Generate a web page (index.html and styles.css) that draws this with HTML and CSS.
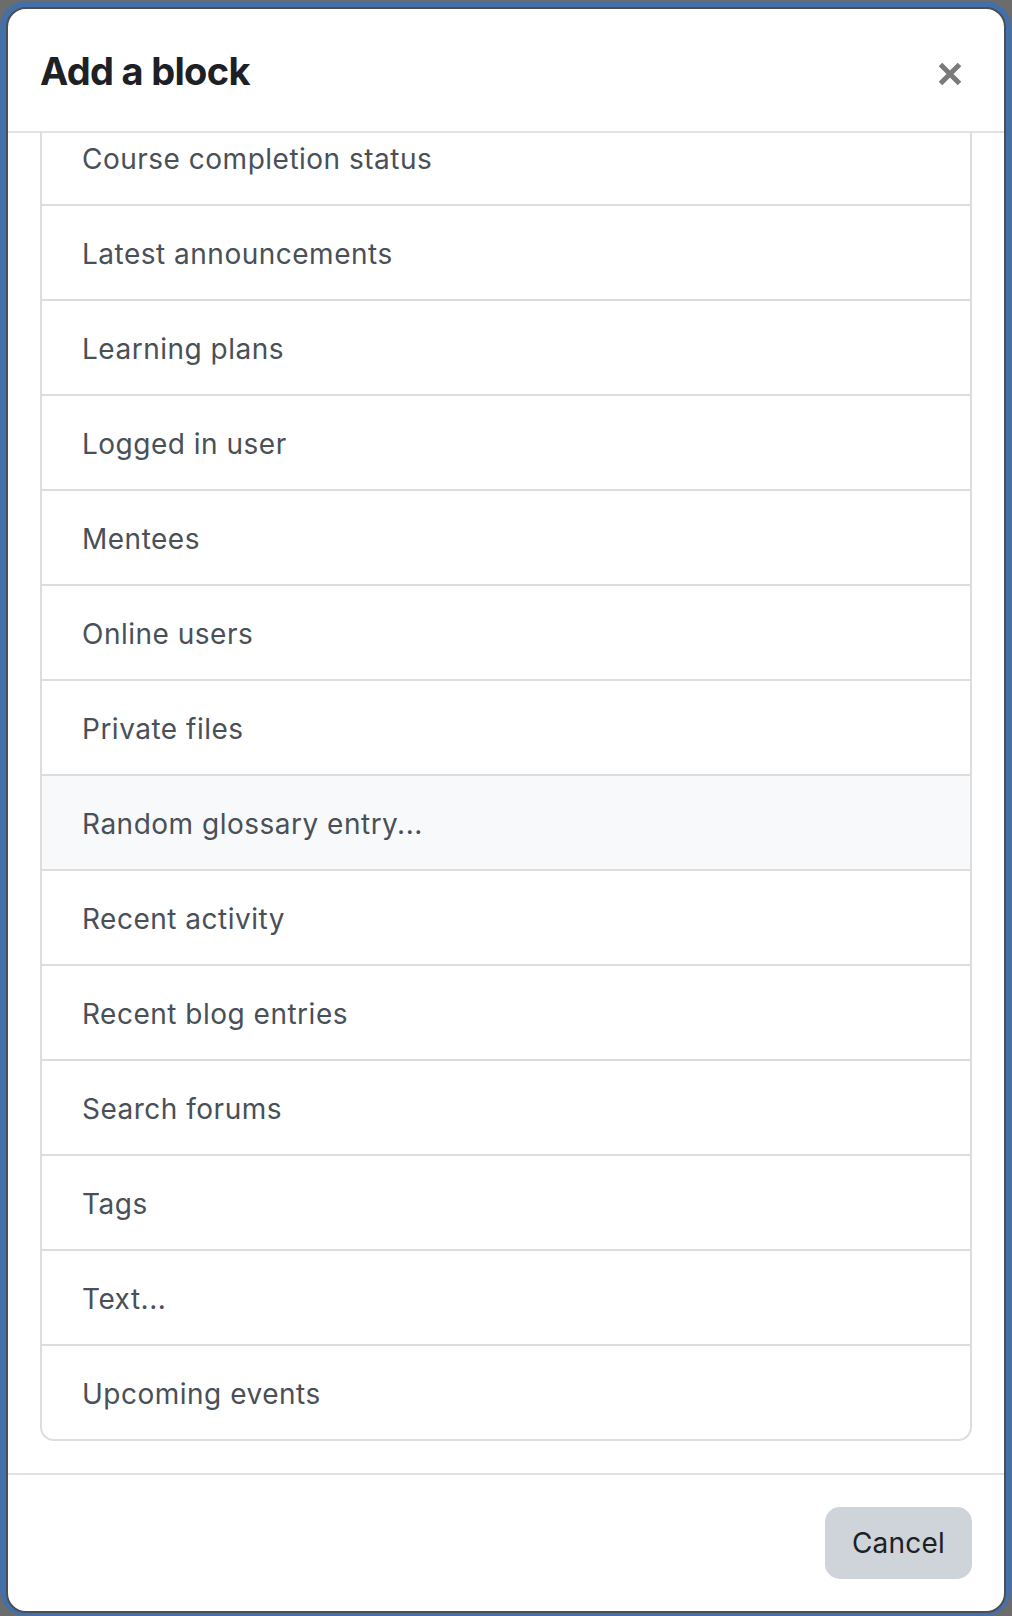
FILE: index.html
```html
<!DOCTYPE html>
<html lang="en">
<head>
<meta charset="utf-8">
<title>Add a block</title>
<link rel="stylesheet" href="styles.css">
</head>
<body>
<div class="ring">
  <div class="modal">
    <div class="modal-header">
      <h5 class="modal-title">Add a block</h5>
      <button class="close" aria-label="Close">
        <svg width="24" height="24" viewBox="0 0 24 24"><path d="M2.5 2.5 L21.5 21.5 M21.5 2.5 L2.5 21.5" stroke="#7a7a7a" stroke-width="5" stroke-linecap="butt" fill="none"/></svg>
      </button>
    </div>
    <div class="modal-body">
      <div class="list-group">
        <a class="item">Course completion status</a>
        <a class="item">Latest announcements</a>
        <a class="item">Learning plans</a>
        <a class="item">Logged in user</a>
        <a class="item">Mentees</a>
        <a class="item">Online users</a>
        <a class="item">Private files</a>
        <a class="item hover">Random glossary entry...</a>
        <a class="item">Recent activity</a>
        <a class="item">Recent blog entries</a>
        <a class="item">Search forums</a>
        <a class="item">Tags</a>
        <a class="item">Text...</a>
        <a class="item">Upcoming events</a>
      </div>
    </div>
    <div class="modal-footer">
      <button class="btn-secondary">Cancel</button>
    </div>
  </div>
</div>
</body>
</html>
```

FILE: styles.css
```css
* { box-sizing: border-box; }
html, body {
  margin: 0;
  padding: 0;
  background: #6c6c6c;
}
body {
  font-family: Inter, "Liberation Sans", sans-serif;
}
.ring {
  margin-top: 1px;
  width: 1011px;
  height: 1615px;
  background: #4470a8;
  border-radius: 26px;
  padding: 6px 5px 3px 6px;
}
.modal {
  background: #fff;
  border: 2px solid #4b4f55;
  border-radius: 20px;
  height: 100%;
  display: flex;
  flex-direction: column;
  overflow: hidden;
}
.modal-header {
  height: 124px;
  flex: none;
  display: flex;
  align-items: flex-start;
  justify-content: space-between;
  padding: 39px 32px 0 32px;
  border-bottom: 2px solid #dee2e6;
}
.modal-title {
  margin: 0;
  font-size: 38px;
  line-height: 46px;
  font-weight: 700;
  letter-spacing: -0.7px;
  color: #1d2125;
}
.close {
  background: none;
  border: 0;
  padding: 0;
  margin: 14px 10px 0 0;
  width: 24px;
  height: 24px;
  display: block;
}
.close svg { display: block; }
.modal-body {
  height: 1340px;
  flex: none;
  overflow: hidden;
  padding: 0 32px;
}
.list-group {
  margin-top: -24px;
  border: 2px solid #dddddd;
  border-radius: 14px;
  display: flex;
  flex-direction: column;
}
.item {
  height: 95px;
  display: flex;
  align-items: center;
  padding: 3px 40px 0 40px;
  font-size: 28px;
  line-height: 42px;
  letter-spacing: 0.5px;
  color: #495057;
  border-bottom: 2px solid #dddddd;
}
.item:last-child {
  height: 93px;
  border-bottom: 0;
  border-radius: 0 0 12px 12px;
}
.item.hover {
  background: #f8f9fa;
}
.modal-footer {
  flex: 1;
  border-top: 2px solid #dee2e6;
  display: flex;
  justify-content: flex-end;
  align-items: flex-start;
  padding: 32px 32px 0 32px;
}
.btn-secondary {
  font-family: Inter, "Liberation Sans", sans-serif;
  font-size: 28px;
  line-height: 42px;
  letter-spacing: 0.2px;
  height: 72px;
  padding: 15px 27px;
  border: 0;
  border-radius: 15px;
  background: #ced4da;
  color: #1d2125;
}
```
